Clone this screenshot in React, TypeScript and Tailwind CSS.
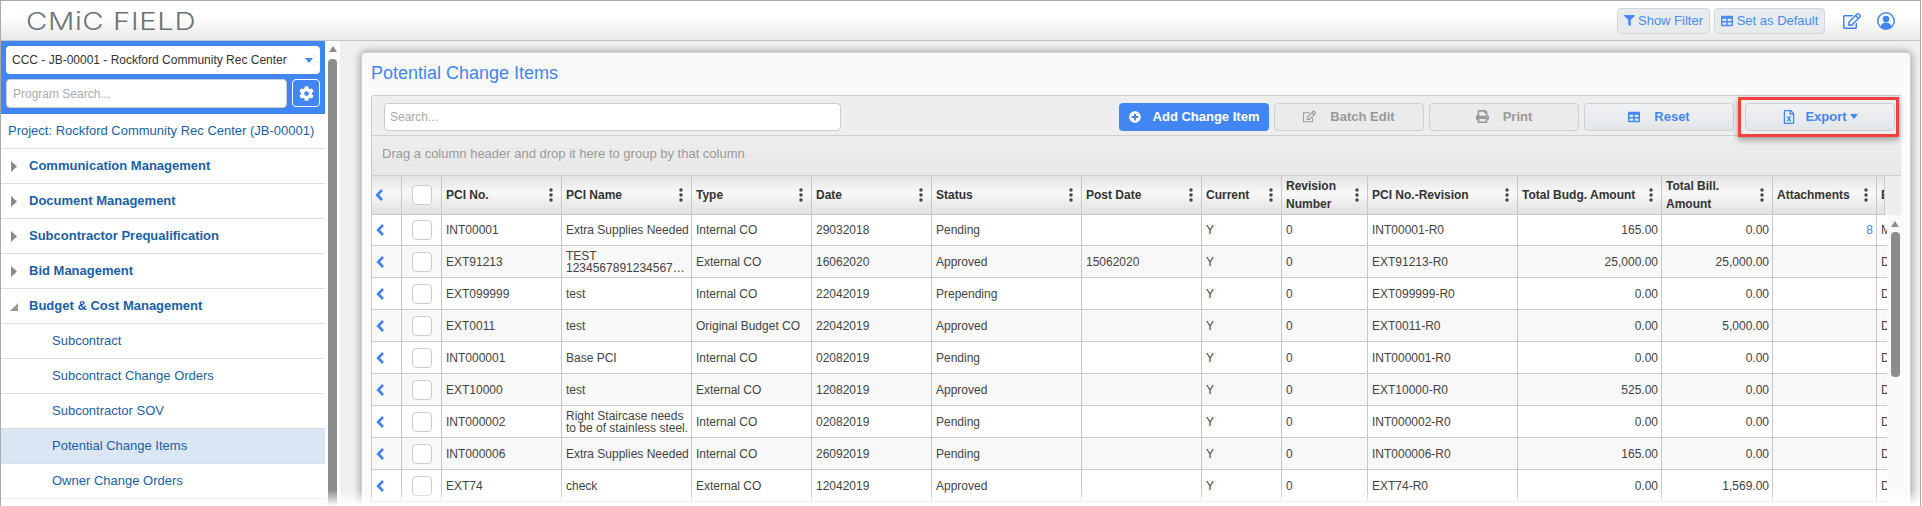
import React from 'react';
import { FaCog, FaFilter, FaPlusCircle, FaPrint, FaRegEdit, FaRegFileExcel, FaTable } from 'react-icons/fa';

const navItems = [
  { label: 'Communication Management', open: false },
  { label: 'Document Management', open: false },
  { label: 'Subcontractor Prequalification', open: false },
  { label: 'Bid Management', open: false },
  { label: 'Budget & Cost Management', open: true },
];

const subItems = ['Subcontract', 'Subcontract Change Orders', 'Subcontractor SOV', 'Potential Change Items', 'Owner Change Orders'];

const rowCols = 'grid-cols-[30px_40px_120px_130px_120px_120px_150px_120px_80px_86px_150px_144px_111px_104px_10px]';
const headCols = 'grid-cols-[30px_40px_120px_130px_120px_120px_150px_120px_80px_86px_150px_144px_111px_104px_8px]';

const rows = [
  ['INT00001', 'Extra Supplies Needed', 'Internal CO', '29032018', 'Pending', '', 'INT00001-R0', '165.00', '0.00', '8', 'M'],
  ['EXT91213', 'TEST 1234567891234567…', 'External CO', '16062020', 'Approved', '15062020', 'EXT91213-R0', '25,000.00', '25,000.00', '', 'D'],
  ['EXT099999', 'test', 'Internal CO', '22042019', 'Prepending', '', 'EXT099999-R0', '0.00', '0.00', '', 'D'],
  ['EXT0011', 'test', 'Original Budget CO', '22042019', 'Approved', '', 'EXT0011-R0', '0.00', '5,000.00', '', 'D'],
  ['INT000001', 'Base PCI', 'Internal CO', '02082019', 'Pending', '', 'INT000001-R0', '0.00', '0.00', '', 'D'],
  ['EXT10000', 'test', 'External CO', '12082019', 'Approved', '', 'EXT10000-R0', '525.00', '0.00', '', 'D'],
  ['INT000002', 'Right Staircase needs to be of stainless steel.', 'Internal CO', '02082019', 'Pending', '', 'INT000002-R0', '0.00', '0.00', '', 'D'],
  ['INT000006', 'Extra Supplies Needed', 'Internal CO', '26092019', 'Pending', '', 'INT000006-R0', '165.00', '0.00', '', 'D'],
  ['EXT74', 'check', 'External CO', '12042019', 'Approved', '', 'EXT74-R0', '0.00', '1,569.00', '', 'D'],
];

const Dots = () => (
  <svg width="4" height="14" viewBox="0 0 4 14" className="shrink-0 mr-[8px]" fill="#444">
    <circle cx="2" cy="2" r="1.7" />
    <circle cx="2" cy="7" r="1.7" />
    <circle cx="2" cy="12" r="1.7" />
  </svg>
);

const Chevron = () => (
  <svg width="9" height="12" viewBox="0 0 9 12" fill="none" stroke="#3b82f6" strokeWidth="2.6">
    <path d="M7 1L2.200 6 7 11" />
  </svg>
);

const Head = ({ label }: { label: string }) => (
  <div className="flex items-center justify-between pl-[4px] border-r border-[#c8c8c8] font-bold text-[12px] leading-[18px] text-[#333]">
    <span>{label}</span>
    <Dots />
  </div>
);

const Cell = ({ children, right }: { children?: React.ReactNode; right?: boolean }) => (
  <div className={`flex items-center leading-[12px] border-r border-[#c8c8c8] overflow-hidden ${right ? 'justify-end pr-[3px]' : 'pl-[4px]'}`}>
    <span className="block">{children}</span>
  </div>
);

const ToolButton = ({ icon, label, disabled }: { icon: React.ReactNode; label: string; disabled?: boolean }) => (
  <button
    className={`h-[28px] w-[150px] flex items-center justify-center gap-[14px] rounded-[4px] border font-bold text-[13px] ${
      disabled
        ? 'border-[#d0d0d0] text-[#999] bg-[#ebebeb]'
        : 'border-[#ccd0d4] text-[#4285f4] bg-[linear-gradient(#eff1f3,#e3e6e9)]'
    }`}
  >
    {icon}
    {label}
  </button>
);

const UserIcon = () => (
  <svg width="18" height="18" viewBox="0 0 18 18">
    <circle cx="9" cy="9" r="8.2" fill="none" stroke="#4285f4" strokeWidth="1.5" />
    <circle cx="9" cy="7" r="3.3" fill="#4285f4" />
    <path d="M3.6 14.6c.6-2.8 2.6-4 5.4-4s4.8 1.2 5.4 4C13 16.2 11.2 17 9 17s-4-.8-5.4-2.400z" fill="#4285f4" />
  </svg>
);

export default function App() {
  return (
    <div className="relative w-[1921px] h-[506px] overflow-hidden border-t border-l border-r border-[#aaa] bg-[#f0f0f0] font-['Liberation_Sans',Arial,sans-serif] text-[12px] text-[#444]">
      {/* top bar */}
      <div className="h-[40px] flex items-center justify-between border-b border-[#c4c4c4] bg-[linear-gradient(#ffffff_40%,#e9e9e9)]">
        <div className="ml-[25px] mt-[3px] text-[24px] font-light tracking-[0.5px] text-[#6e7276] font-['Inter',sans-serif] origin-left scale-x-[1.22]">CMiC FIELD</div>
        <div className="flex items-center mr-[25px]">
          <button className="h-[26px] w-[93px] flex items-center justify-center gap-[3px] rounded-[4px] border border-[#cfd5da] bg-[#e7ebee] text-[13px] text-[#4a8af4]">
            <FaFilter size={11} />
            Show Filter
          </button>
          <button className="ml-[4px] h-[26px] w-[111px] flex items-center justify-center gap-[4px] rounded-[4px] border border-[#cfd5da] bg-[#e7ebee] text-[13px] text-[#4a8af4]">
            <FaTable size={12} />
            Set as Default
          </button>
          <FaRegEdit size={18} className="ml-[18px] text-[#4285f4]" />
          <div className="ml-[16px] flex"><UserIcon /></div>
        </div>
      </div>

      <div className="flex h-[465px]">
        {/* sidebar */}
        <div className="w-[339px] shrink-0 flex bg-white">
          <div className="w-[324px] shrink-0">
            <div className="h-[73px] bg-[#4285f4] px-[5px] pt-[5px]">
              <div className="h-[28px] w-[314px] flex items-center justify-between px-[6px] rounded-[4px] bg-white text-[12px] text-[#333]">
                <span>CCC - JB-00001 - Rockford Community Rec Center</span>
                <span className="w-0 h-0 mr-[1px] border-x-[4px] border-x-transparent border-t-[5px] border-t-[#4285f4]" />
              </div>
              <div className="mt-[5px] flex justify-between w-[314px]">
                <div className="h-[29px] w-[281px] flex items-center px-[6px] rounded-[4px] bg-white border border-[#ccc] text-[12px] text-[#aaa]">Program Search...</div>
                <div className="h-[28px] w-[28px] flex items-center justify-center rounded-[4px] border border-white text-white"><FaCog size={15} /></div>
              </div>
            </div>
            <div className="h-[35px] flex items-center pl-[7px] border-b border-[#d8dee6] text-[13px] text-[#1a5fa8]">Project: Rockford Community Rec Center (JB-00001)</div>
            {navItems.map((n) => (
              <div key={n.label} className="h-[35px] flex items-center border-b border-[#d8dee6] font-bold text-[13px] text-[#1a5fa8]">
                {n.open ? (
                  <svg width="8" height="8" viewBox="0 0 8 8" className="ml-[9px] mr-[11px] mt-[2px]"><path d="M8 0v8H0z" fill="#999" /></svg>
                ) : (
                  <svg width="6" height="11" viewBox="0 0 6 11" className="ml-[10px] mr-[12px]"><path d="M0 0l6 5.500-6 5.500z" fill="#8a8a8a" /></svg>
                )}
                {n.label}
              </div>
            ))}
            {subItems.map((s) => (
              <div key={s} className={`h-[35px] flex items-center pl-[51px] border-b border-[#d8dee6] text-[13px] text-[#1a5fa8] ${s === 'Potential Change Items' ? 'bg-[#dae6f3]' : ''}`}>
                {s}
              </div>
            ))}
          </div>
          <div className="w-[15px] pl-[3px] flex flex-col items-start">
            <span className="mt-[5px] ml-[0.5px] w-0 h-0 border-x-[4.500px] border-x-transparent border-b-[6px] border-b-[#8c8c8c]" />
            <div className="mt-[7px] w-[9px] h-[460px] rounded-t-[4px] bg-[#8c8c8c]" />
          </div>
        </div>

        {/* main */}
        <div className="flex-1 pt-[11px] pl-[21px]">
          <div className="w-[1550px] h-[470px] rounded-t-[4px] border border-[#d0d0d0] bg-[#fafafa] shadow-[0_0_8px_rgba(0,0,0,0.4)] px-[9px]">
            <div className="h-[42px] pb-[2px] flex items-center text-[18px] text-[#4285f4]">Potential Change Items</div>
            <div className="border-t border-l border-[#cacaca] rounded-tl-[4px]">
              {/* toolbar */}
              <div className="h-[40px] flex items-center bg-[#efeeee] border-b border-[#cfcfcf] pl-[12px] pr-[6px] pt-[2px]">
                <div className="h-[28px] w-[457px] flex items-center px-[5px] rounded-[4px] border border-[#ccc] bg-white text-[#aaa] text-[12px]">Search...</div>
                <div className="ml-auto flex items-center gap-[5px]">
                  <button className="h-[28px] w-[150px] flex items-center justify-center gap-[12px] rounded-[4px] bg-[#4285f4] text-white font-bold text-[13px]">
                    <FaPlusCircle size={12} />
                    Add Change Item
                  </button>
                  <ToolButton disabled icon={<FaRegEdit size={13} />} label="Batch Edit" />
                  <ToolButton disabled icon={<FaPrint size={13} />} label="Print" />
                  <ToolButton icon={<FaTable size={12} />} label="Reset" />
                  <div className="relative ml-[6px]">
                    <button className="h-[28px] w-[150px] flex items-center justify-center gap-[3px] rounded-[4px] border border-[#ccd0d4] text-[#4285f4] bg-[linear-gradient(#eff1f3,#e3e6e9)] font-bold text-[13px]">
                      <FaRegFileExcel size={14} className="mr-[6px]" />
                      Export
                      <span className="w-0 h-0 border-x-[4px] border-x-transparent border-t-[5px] border-t-[#4285f4]" />
                    </button>
                    <div className="absolute -left-[7px] -right-[4px] -top-[6px] -bottom-[6px] border-[3px] border-[#f4403f] shadow-[0_3px_6px_rgba(0,0,0,0.35)]" />
                  </div>
                </div>
              </div>
              {/* group bar */}
              <div className="h-[40px] flex items-center pl-[10px] pb-[4px] border-b border-[#cfcfcf] bg-[linear-gradient(#efeeee,#e8e7e7)] text-[#999] text-[13px]">
                Drag a column header and drop it here to group by that column
              </div>
              {/* header */}
              <div className="flex h-[39px] bg-[#efeeee]">
                <div className={`grid ${headCols} h-full bg-[linear-gradient(#e3e3e3,#f8f8f8_45%,#e1e1e1)] border-b border-[#c8c8c8]`}>
                  <div className="flex items-center pl-[3px] border-r border-[#c8c8c8]"><Chevron /></div>
                  <div className="flex items-center justify-center border-r border-[#c8c8c8]"><span className="w-[20px] h-[20px] rounded-[4px] border border-[#ccc] bg-white" /></div>
                  {['PCI No.', 'PCI Name', 'Type', 'Date', 'Status', 'Post Date', 'Current'].map((h) => <Head key={h} label={h} />)}
                  <Head label="Revision Number" />
                  <Head label="PCI No.-Revision" />
                  <Head label="Total Budg. Amount" />
                  <Head label="Total Bill. Amount" />
                  <Head label="Attachments" />
                  <div className="border-r border-[#c8c8c8] pl-[4px] flex items-center font-bold text-[#333] overflow-hidden">E</div>
                </div>
              </div>
              {/* rows */}
              <div className="flex bg-[#fafafa]">
                <div className="shrink-0">
                  {rows.map((r, i) => (
                    <div key={r[0]} className={`grid ${rowCols} ${i === 0 ? 'h-[31px]' : 'h-[32px]'} border-b border-[#c8c8c8] ${i % 2 === 1 ? 'bg-[#f8f8f8]' : 'bg-white'}`}>
                      <div className="flex items-center pl-[4px] border-r border-[#c8c8c8]"><Chevron /></div>
                      <div className="flex items-center justify-center border-r border-[#c8c8c8]"><span className="w-[20px] h-[20px] rounded-[4px] border border-[#ccc] bg-white" /></div>
                      <Cell>{r[0]}</Cell>
                      <Cell>{r[1]}</Cell>
                      <Cell>{r[2]}</Cell>
                      <Cell>{r[3]}</Cell>
                      <Cell>{r[4]}</Cell>
                      <Cell>{r[5]}</Cell>
                      <Cell>Y</Cell>
                      <Cell>0</Cell>
                      <Cell>{r[6]}</Cell>
                      <Cell right>{r[7]}</Cell>
                      <Cell right>{r[8]}</Cell>
                      <Cell right><span className="text-[#4285f4]">{r[9]}</span></Cell>
                      <div className="pl-[4px] flex items-center overflow-hidden">{r[10]}</div>
                    </div>
                  ))}
                </div>
                <div className="ml-[4px] flex flex-col items-start">
                  <span className="mt-[6px] w-0 h-0 border-x-[4.500px] border-x-transparent border-b-[6px] border-b-[#8c8c8c]" />
                  <div className="mt-[5px] w-[9px] h-[145px] rounded-[4px] bg-[#8c8c8c]" />
                </div>
              </div>
            </div>
          </div>
        </div>
      </div>
      {/* bottom fade */}
      <div className="absolute left-0 right-0 bottom-0 h-[16px] bg-[linear-gradient(rgba(255,255,255,0),#ffffff)]" />
    </div>
  );
}
